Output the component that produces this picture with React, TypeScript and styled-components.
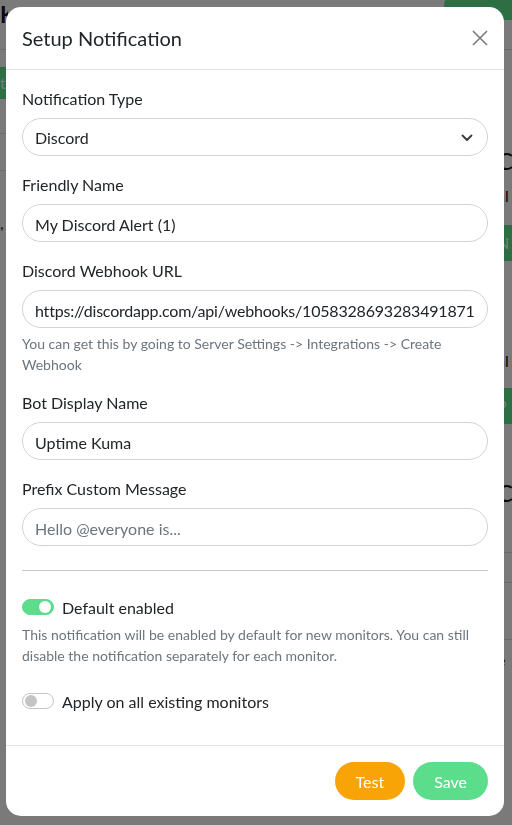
import styled, { createGlobalStyle } from "styled-components";

const GlobalStyle = createGlobalStyle`
  html, body {
    margin: 0;
    padding: 0;
  }
  body {
    font-family: Lato, "Noto Sans", sans-serif;
    color: #212529;
    background: #f5f5f5;
  }
  * {
    box-sizing: border-box;
  }
`;

/* ---------- page behind the modal ---------- */

const Page = styled.div`
  height: 825px;
  overflow: hidden;
  background: #f5f5f5;
  display: flex;
  flex-direction: column;
`;

const TopBar = styled.header`
  display: flex;
  justify-content: space-between;
  align-items: flex-start;
  height: 50px;
  flex-shrink: 0;
  border-bottom: 1px solid #d6d6d6;
`;

const Brand = styled.div`
  width: 8px;
  overflow: hidden;
  font-size: 22px;
  font-weight: bold;
  line-height: 30px;
  color: #111;
`;

const TopButton = styled.div`
  width: 68px;
  height: 28px;
  margin-top: -8px;
  border-radius: 18px 0 0 18px;
  background: #5cdd8b;
`;

const Main = styled.div`
  display: flex;
  justify-content: space-between;
  flex: 1;
`;

const Side = styled.div`
  width: 10px;
  overflow: hidden;
  white-space: nowrap;
`;

const Detail = styled.div`
  width: 15px;
  overflow: hidden;
  white-space: nowrap;
  padding-top: 96px;
`;

const GreenBlock = styled.div<{ $top: number; $height: number }>`
  margin-top: ${(p) => p.$top}px;
  height: ${(p) => p.$height}px;
  background: #5cdd8b;
  color: #e8fff0;
  font-size: 16px;
  line-height: ${(p) => p.$height}px;
`;

const ListRow = styled.div<{ $height: number }>`
  height: ${(p) => p.$height}px;
  border-bottom: 1px solid #d6d6d6;
`;

const BgHeading = styled.div<{ $top: number }>`
  margin-top: ${(p) => p.$top}px;
  font-size: 24px;
  line-height: 30px;
  color: #111;
`;

const BgText = styled.div<{ $top: number }>`
  margin-top: ${(p) => p.$top}px;
  font-size: 16px;
  line-height: 24px;
  color: #111;
`;

/* ---------- modal ---------- */

const Overlay = styled.div`
  position: fixed;
  inset: 0;
  background: rgba(0, 0, 0, 0.5);
  padding: 7px 0 0 6px;
`;

const Dialog = styled.div`
  width: 498px;
  background: #fff;
  border-radius: 15px;
  overflow: hidden;
`;

const Header = styled.div`
  display: flex;
  align-items: center;
  justify-content: space-between;
  padding: 16px;
  border-bottom: 1px solid #dee2e6;
`;

const Title = styled.h5`
  margin: 0;
  font-size: 20px;
  font-weight: 400;
  line-height: 30px;
  color: #212529;
`;

const CloseButton = styled.button`
  display: flex;
  padding: 0;
  border: none;
  background: transparent;
  color: #7a7a7a;
  cursor: pointer;
`;

const Body = styled.div`
  padding: 16px;
`;

const Field = styled.div<{ $last?: boolean }>`
  margin-bottom: ${(p) => (p.$last ? 0 : 16)}px;
`;

const Label = styled.label`
  display: block;
  padding-top: 1px;
  margin-bottom: 7px;
  font-size: 16px;
  line-height: 24px;
`;

const inputBase = `
  display: block;
  width: 100%;
  height: 38px;
  padding: 7px 12px 5px;
  border: 1px solid #ced4da;
  border-radius: 19px;
  background: #fff;
  font-family: inherit;
  font-size: 16px;
  line-height: 24px;
  color: #212529;
  outline: none;
`;

const Input = styled.input<{ $tight?: boolean }>`
  ${inputBase}
  letter-spacing: ${(p) => (p.$tight ? "-0.2px" : "normal")};
  &::placeholder {
    color: #6c757d;
  }
`;

const SelectWrap = styled.div`
  position: relative;
`;

const Select = styled.select`
  ${inputBase}
  appearance: none;
  padding-right: 36px;
`;

const Chevron = styled.svg`
  position: absolute;
  right: 13px;
  top: 12px;
  pointer-events: none;
`;

const Help = styled.div`
  margin-top: 4px;
  padding-top: 1px;
  margin-bottom: -1px;
  font-size: 14px;
  line-height: 21px;
  color: #6c757d;
`;

const Divider = styled.hr`
  margin: 24px 0;
  border: none;
  border-top: 1px solid #c8c9ca;
`;

const CheckGroup = styled.div<{ $top?: number }>`
  margin-top: ${(p) => p.$top ?? 0}px;
  margin-bottom: 16px;
`;

const SwitchRow = styled.label`
  display: flex;
  align-items: center;
  gap: 8px;
  height: 24px;
  font-size: 16px;
  line-height: 24px;
`;

const SwitchText = styled.span`
  padding-top: 1px;
  margin-bottom: -1px;
`;

const Switch = styled.span<{ $on: boolean }>`
  display: flex;
  align-items: center;
  justify-content: ${(p) => (p.$on ? "flex-end" : "flex-start")};
  width: 32px;
  height: 16px;
  padding: 0 2px;
  border-radius: 8px;
  border: 1px solid ${(p) => (p.$on ? "#5cdd8b" : "#c4c4c4")};
  background: ${(p) => (p.$on ? "#5cdd8b" : "#fff")};

  &::after {
    content: "";
    width: 12px;
    height: 12px;
    border-radius: 50%;
    background: ${(p) => (p.$on ? "#fff" : "#c4c4c4")};
  }
`;

const Footer = styled.div`
  display: flex;
  justify-content: flex-end;
  gap: 8px;
  padding: 16px;
  border-top: 1px solid #dee2e6;
`;

const Button = styled.button<{ $color: string }>`
  height: 38px;
  padding: 1px 21px 0;
  border: none;
  border-radius: 19px;
  background: ${(p) => p.$color};
  color: #fff;
  font-family: inherit;
  font-size: 16px;
  line-height: 24px;
  cursor: pointer;
`;

const App = () => {
  return (
    <>
      <GlobalStyle />
      <Page>
        <TopBar>
          <Brand>K</Brand>
          <TopButton />
        </TopBar>
        <Main>
          <Side>
            <GreenBlock $top={17} $height={32}>to</GreenBlock>
            <ListRow $height={35} />
            <ListRow $height={37} />
            <BgText $top={40}>,</BgText>
          </Side>
          <Detail>
            <BgHeading $top={0}>C</BgHeading>
            <BgText $top={8}>al</BgText>
            <GreenBlock $top={17} $height={36}>N</GreenBlock>
            <BgText $top={88}>al</BgText>
            <GreenBlock $top={15} $height={36}>P</GreenBlock>
            <BgHeading $top={54}>C</BgHeading>
            <ListRow $height={45} />
            <ListRow $height={30} />
            <ListRow $height={57} />
            <BgText $top={8}>e</BgText>
            <BgText $top={24}>:</BgText>
          </Detail>
        </Main>
      </Page>

      <Overlay>
        <Dialog>
          <Header>
            <Title>Setup Notification</Title>
            <CloseButton aria-label="Close">
              <svg width="16" height="16" viewBox="0 0 16 16">
                <path d="M1 1L15 15M15 1L1 15" stroke="currentColor" strokeWidth="1.6" />
              </svg>
            </CloseButton>
          </Header>

          <Body>
            <Field>
              <Label>Notification Type</Label>
              <SelectWrap>
                <Select defaultValue="discord">
                  <option value="discord">Discord</option>
                </Select>
                <Chevron width="16" height="16" viewBox="0 0 16 16">
                  <path
                    d="M3.5 5.5l4.5 4.5 4.5-4.5"
                    fill="none"
                    stroke="#343a40"
                    strokeWidth="1.8"
                    strokeLinecap="round"
                    strokeLinejoin="round"
                  />
                </Chevron>
              </SelectWrap>
            </Field>

            <Field>
              <Label>Friendly Name</Label>
              <Input defaultValue="My Discord Alert (1)" />
            </Field>

            <Field>
              <Label>Discord Webhook URL</Label>
              <Input $tight defaultValue="https://discordapp.com/api/webhooks/1058328693283491871" />
              <Help>You can get this by going to Server Settings -&gt; Integrations -&gt; Create Webhook</Help>
            </Field>

            <Field>
              <Label>Bot Display Name</Label>
              <Input defaultValue="Uptime Kuma" />
            </Field>

            <Field $last>
              <Label>Prefix Custom Message</Label>
              <Input placeholder="Hello @everyone is..." />
            </Field>

            <Divider />

            <CheckGroup>
              <SwitchRow>
                <Switch $on />
                <SwitchText>Default enabled</SwitchText>
              </SwitchRow>
              <Help>
                This notification will be enabled by default for new monitors. You can still disable the
                notification separately for each monitor.
              </Help>
            </CheckGroup>

            <CheckGroup $top={24}>
              <SwitchRow>
                <Switch $on={false} />
                <SwitchText>Apply on all existing monitors</SwitchText>
              </SwitchRow>
            </CheckGroup>
          </Body>

          <Footer>
            <Button $color="#f8a306">Test</Button>
            <Button $color="#5cdd8b">Save</Button>
          </Footer>
        </Dialog>
      </Overlay>
    </>
  );
};

export default App;
